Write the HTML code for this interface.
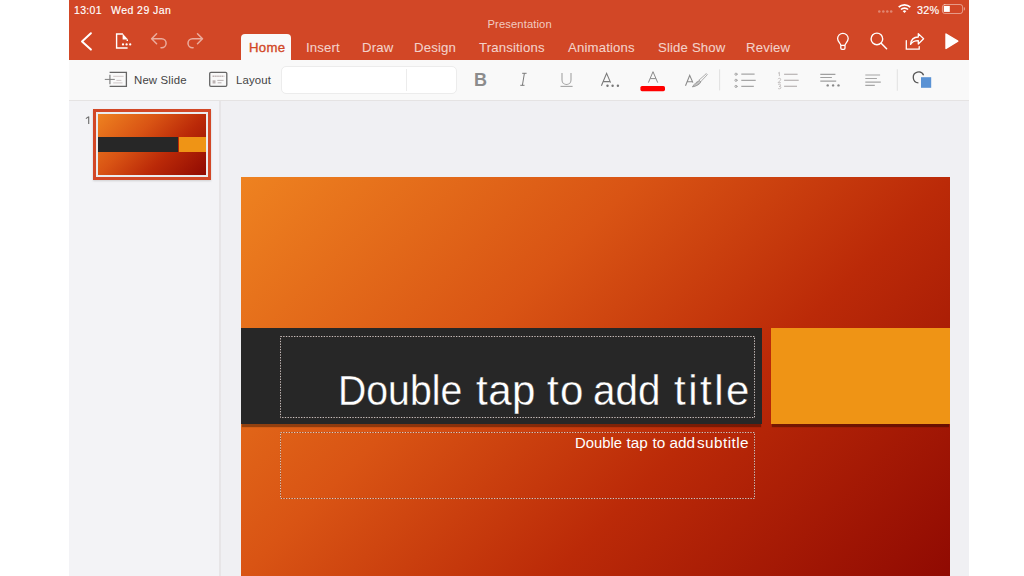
<!DOCTYPE html>
<html><head><meta charset="utf-8">
<style>
*{margin:0;padding:0;box-sizing:border-box}
html,body{width:1024px;height:576px;overflow:hidden;background:#fff;font-family:"Liberation Sans",sans-serif}
.a{position:absolute}
.t{position:absolute;white-space:nowrap;line-height:1}
#ribbon{left:69px;top:0;width:900px;height:60px;background:#d24726}
#toolbar{left:69px;top:60px;width:900px;height:41px;background:#f9f9f9;border-bottom:1px solid #e5e3e3}
#side{left:69px;top:101px;width:151px;height:475px;background:#f3f3f6}
#divider{left:219px;top:101px;width:2px;height:475px;background:#e7e5e7}
#canvas{left:221px;top:101px;width:748px;height:475px;background:#f0f0f3}
.st{color:#fff;font-size:10.5px;-webkit-text-stroke:0.15px #fff;letter-spacing:0.3px}
.tab{color:rgba(255,255,255,.75);font-size:13.2px;letter-spacing:0.15px;-webkit-text-stroke:0.1px rgba(255,255,255,.5)}
#hometab{left:241px;top:34px;width:50px;height:27px;background:#f9f9f9;border-radius:4px 4px 0 0}
.tb{color:#444;font-size:11.4px;letter-spacing:0.15px}
#slide{left:241px;top:177px;width:709px;height:399px;overflow:hidden;
 background:linear-gradient(135deg,#ee8220 0%,#d95414 36%,#bb2a08 64%,#900a02 100%)}
</style></head><body>
<div id="ribbon" class="a"></div>
<div id="toolbar" class="a"></div>
<div id="side" class="a"></div>
<div id="divider" class="a"></div>
<div id="canvas" class="a"></div>

<!-- status bar -->
<div class="t st" style="left:74px;top:5px">13:01</div>
<div class="t st" style="left:111px;top:5px;letter-spacing:0.45px">Wed 29 Jan</div>
<div class="t" style="left:487.5px;top:19px;font-size:11.2px;letter-spacing:0.12px;color:rgba(255,255,255,.72)">Presentation</div>
<div class="t st" style="left:917px;top:5px;font-size:10.8px">32%</div>

<!-- tabs -->
<div id="hometab" class="a"></div>
<div class="t tab" style="left:249px;top:41px;color:#d24726;-webkit-text-stroke:0.35px #d24726;letter-spacing:0.3px">Home</div>
<div class="t tab" style="left:306px;top:41px">Insert</div>
<div class="t tab" style="left:362px;top:41px">Draw</div>
<div class="t tab" style="left:414px;top:41px">Design</div>
<div class="t tab" style="left:479px;top:41px">Transitions</div>
<div class="t tab" style="left:568px;top:41px">Animations</div>
<div class="t tab" style="left:658px;top:41px">Slide Show</div>
<div class="t tab" style="left:746px;top:41px">Review</div>

<!-- toolbar text -->
<div class="t tb" style="left:134px;top:75px">New Slide</div>
<div class="t tb" style="left:236px;top:75px">Layout</div>
<div class="a" style="left:281px;top:66px;width:176px;height:28px;background:#fff;border:1px solid #ececec;border-radius:5px"></div>
<div class="a" style="left:406px;top:69px;width:1px;height:22px;background:#ececec"></div>

<!-- slide -->
<div id="slide" class="a">
  <div class="a" style="left:0;top:151px;width:521px;height:96px;background:#272727;box-shadow:0 4px 1px -1px rgba(0,0,0,.35)"></div>
  <div class="a" style="left:530px;top:151px;width:179px;height:96px;background:#ef9415;box-shadow:0 4px 1px -1px rgba(0,0,0,.35)"></div>
  <svg class="a" style="left:0;top:0" width="709" height="399" viewBox="0 0 709 399">
   <g fill="none" stroke-width="1">
    <rect x="39.5" y="159.5" width="474" height="81" stroke="rgba(60,30,20,.35)"/>
    <rect x="39.5" y="159.5" width="474" height="81" stroke="rgba(255,255,255,.72)" stroke-dasharray="1.35 1.35"/>
    <rect x="39.5" y="255.5" width="474" height="66" stroke="rgba(60,30,20,.35)"/>
    <rect x="39.5" y="255.5" width="474" height="66" stroke="rgba(255,255,255,.72)" stroke-dasharray="1.35 1.35"/>
   </g>
  </svg>
  <div class="a" style="left:0;top:193px;width:709px;height:50px;font-size:42px;line-height:1;color:#fff;white-space:nowrap;-webkit-text-stroke:0.3px #272727">
   <span class="a" style="left:97px;transform-origin:0 0;transform:scaleX(.933)">Double</span>
   <span class="a" style="left:235px;letter-spacing:0.5px">tap</span>
   <span class="a" style="left:306px;letter-spacing:1.4px">to</span>
   <span class="a" style="left:352px;transform-origin:0 0;transform:scaleX(.961)">add</span>
   <span class="a" style="left:433px;letter-spacing:2.5px">title</span>
  </div>
  <div class="a" style="left:0;top:258px;width:709px;height:20px;font-size:15.3px;line-height:1;color:#fff;white-space:nowrap">
   <span class="a" style="left:334px;transform-origin:0 0;transform:scaleX(.97)">Double</span>
   <span class="a" style="left:385.5px">tap</span>
   <span class="a" style="left:411.5px">to</span>
   <span class="a" style="left:428.5px">add</span>
   <span class="a" style="left:456px;letter-spacing:0.45px">subtitle</span>
  </div>
</div>

<!-- thumbnail -->
<div class="a" style="left:93px;top:109px;width:118px;height:71px;border:3px solid #d24726;background:#eaecee;box-shadow:0 1px 2px rgba(0,0,0,.15)"></div>
<div class="a" style="left:98px;top:114px;width:108px;height:61px;overflow:hidden;background:linear-gradient(135deg,#ee8220 0%,#d95414 36%,#bb2a08 64%,#900a02 100%)">
  <div class="a" style="left:0;top:23px;width:80px;height:15px;background:#272727"></div>
  <div class="a" style="left:81px;top:23px;width:27px;height:15px;background:#ef9415"></div>
</div>
<svg class="a" style="left:0;top:0" width="220" height="200"><path d="M88.7,116.6 V124 M88.7,116.6 L85.9,118.6" fill="none" stroke="#6a6a6a" stroke-width="1.1"/></svg>

<svg class="a" style="left:0;top:0" width="1024" height="576" viewBox="0 0 1024 576">
<g fill="none" stroke-linecap="round" stroke-linejoin="round">
 <!-- back chevron -->
 <polyline points="90.9,33.2 82,41.4 90.9,49.6" stroke="#fff" stroke-width="2"/>
 <!-- file icon -->
 <path d="M122.9,34 H116.6 V48 H127.6 M127.3,39.4 V41" stroke="#fff" stroke-width="1.4" stroke-linecap="butt" stroke-linejoin="miter"/>
 <path d="M122.6,33.4 L128,39.4 H122.6 Z" fill="#fff" stroke="none"/>
 <g fill="#fff" stroke="none"><circle cx="123" cy="44.4" r="1.15"/><circle cx="126.6" cy="44.4" r="1.15"/><circle cx="130.2" cy="44.4" r="1.15"/></g>
 <!-- undo -->
 <path d="M156.6,33.7 L151.6,38.8 L156.6,43.7 M151.8,38.8 H161.6 A4.5,4.5 0 0 1 161.6,47.8 H161" stroke="rgba(255,255,255,.55)" stroke-width="1.5"/>
 <!-- redo -->
 <path d="M197.5,33.7 L202.5,38.8 L197.5,43.7 M202.3,38.8 H192.5 A4.5,4.5 0 0 0 192.5,47.8 H193.1" stroke="rgba(255,255,255,.55)" stroke-width="1.5"/>
 <!-- bulb -->
 <path d="M840.8,45.3 C840.8,43.4 837.6,41.8 837.6,38.6 A5.3,5.3 0 0 1 848.2,38.6 C848.2,41.8 845,43.4 845,45.3 Z M840.8,45.3 V48.1 Q840.8,49.3 842,49.3 H843.8 Q845,49.3 845,48.1 V45.3" stroke="#fff" stroke-width="1.3"/>
 <!-- search -->
 <circle cx="876.9" cy="38.9" r="5.8" stroke="#fff" stroke-width="1.4"/>
 <path d="M881.2,43.3 L886.6,48.7" stroke="#fff" stroke-width="1.5"/>
 <!-- share -->
 <path d="M906.3,40.6 V49.2 H919.2 V46.6" stroke="#fff" stroke-width="1.3" stroke-linejoin="miter"/>
 <path d="M910.6,44.4 C911,39.6 914,37 918.3,37 V33.6 L923.6,38.8 L918.3,44 V40.6 C914.6,40.6 912.2,41.8 910.6,44.4 Z" stroke="#fff" stroke-width="1.3"/>
 <!-- play -->
 <path d="M946,34 L957.8,41.2 L946,48.4 Z" fill="#fff" stroke="#fff" stroke-width="1.4"/>
 <!-- status dots -->
 <g fill="rgba(255,255,255,.35)" stroke="none"><circle cx="879.3" cy="11.5" r="1.3"/><circle cx="883.3" cy="11.5" r="1.3"/><circle cx="887.3" cy="11.5" r="1.3"/><circle cx="891.2" cy="11.5" r="1.3"/></g>
 <!-- wifi -->
 <path d="M898.7,7.2 A8.2,8.2 0 0 1 910.3,7.2" stroke="#fff" stroke-width="1.7" stroke-linecap="butt"/>
 <path d="M901,9.5 A4.9,4.9 0 0 1 908,9.5" stroke="#fff" stroke-width="1.7" stroke-linecap="butt"/>
 <path d="M904.5,13 L902.7,11.2 A2.5,2.5 0 0 1 906.3,11.2 Z" fill="#fff" stroke="none"/>
 <!-- battery -->
 <rect x="942.4" y="4.5" width="20.2" height="9" rx="2.4" stroke="rgba(255,255,255,.45)" stroke-width="1"/>
 <rect x="943.8" y="5.9" width="6" height="6" fill="#fff" stroke="none"/>
 <path d="M963.8,7.2 H964.2 A0.8,0.8 0 0 1 965,8 V9.6 A0.8,0.8 0 0 1 964.2,10.4 H963.8 Z" fill="rgba(255,255,255,.45)" stroke="none"/>

 <!-- new slide icon -->
 <path d="M109.6,72.4 H126.4 V86.4 H109.6" stroke="#666" stroke-width="1.3" stroke-linecap="butt" stroke-linejoin="miter"/>
 <path d="M109.9,74.8 V84.2" stroke="#999" stroke-width="1.5" stroke-linecap="butt"/>
 <path d="M104.8,79.4 H114.8" stroke="#808080" stroke-width="1" stroke-linecap="butt"/>
 <path d="M113.2,76.3 H123.6 M116.4,80.4 H121.4 M113.2,82.9 H122.5" stroke="#cbc1c1" stroke-width="0.9" stroke-linecap="butt"/>
 <!-- layout icon -->
 <rect x="209.7" y="72.3" width="17.1" height="14" rx="1.2" stroke="#666" stroke-width="1.3"/>
 <path d="M212.6,76.3 H224.3" stroke="#b8acac" stroke-width="1.6" stroke-linecap="butt" stroke-dasharray="1.3 0.6"/>
 <rect x="212.6" y="80.3" width="2.9" height="3.2" fill="#bdb4b4" stroke="none"/>
 <path d="M217.3,80.4 H223.6 M217.7,82.8 H221.5" stroke="#b5adad" stroke-width="0.9" stroke-linecap="butt"/>

 <!-- italic I -->
 <path d="M522.2,73.3 H526.6 M520.3,85.3 H524.5 M524.4,73.3 L522.4,85.3" stroke="#7a7a7a" stroke-width="1" stroke-linecap="butt"/>
 <!-- underline U -->
 <path d="M562,73 V80 A4.5,4.5 0 0 0 571,80 V73" stroke="#a4a4a4" stroke-width="1.1" stroke-linecap="butt"/>
 <path d="M560.5,86.4 H572.6" stroke="#a4a4a4" stroke-width="1.1" stroke-linecap="butt"/>
 <!-- A.. -->
 <path d="M601.4,85.8 L606.6,73.4 L610.6,82.6 M603.6,81.6 H610.2" stroke="#7a7a7a" stroke-width="1.1" stroke-linecap="butt" stroke-linejoin="miter"/>
 <g fill="#777" stroke="none"><circle cx="607.5" cy="85.8" r="1.2"/><circle cx="612.6" cy="85.8" r="1.2"/><circle cx="617.9" cy="85.8" r="1.2"/></g>
 <!-- font color A -->
 <path d="M648.4,82.6 L653,71.7 L657.7,82.6 M650.2,78.6 H655.9" stroke="#8a8a8a" stroke-width="1" stroke-linecap="butt" stroke-linejoin="miter"/>
 <rect x="640.4" y="86" width="24.6" height="5.2" rx="1.6" fill="#ff0000" stroke="none"/>
 <!-- format painter -->
 <path d="M685.5,85.8 L689.7,75.3 L692.9,82.6 M687.1,81.8 H692.3" stroke="#8a8a8a" stroke-width="1.1" stroke-linecap="butt" stroke-linejoin="miter"/>
 <path d="M706.6,73.9 L707.3,74.7 L700.5,81.9 L699.1,80.6 Z" stroke="#9a9a9a" stroke-width="0.8"/>
 <path d="M699.3,80.9 C697.2,81.2 694.4,83.6 692.4,86.9 C695.9,86.2 699.6,84.7 700.7,82.2 Z" stroke="#8a8a8a" stroke-width="0.8" fill="#cfcfcf"/>
 <path d="M694.6,85.8 L697.8,82.3 M696.8,85.4 L699.4,82.8" stroke="#9a9a9a" stroke-width="0.6"/>

 <!-- dividers -->
 <path d="M719.6,69.3 V90.4 M897.3,69.3 V90.7" stroke="#e1e1e1" stroke-width="1" stroke-linecap="butt"/>
 <!-- bullets -->
 <g fill="none" stroke="#a6a6a6" stroke-width="1"><circle cx="736" cy="74.2" r="1.1"/><circle cx="736" cy="80.3" r="1.1"/><circle cx="736" cy="86.4" r="1.1"/></g>
 <path d="M741.3,74.2 H754.6 M741.3,80.3 H755.7 M741.3,86.4 H753.8" stroke="#a6a6a6" stroke-width="1.2" stroke-linecap="butt"/>
 <!-- numbers -->
 <path d="M784.1,74.25 H797.6 M784.1,80.3 H798.7 M784.1,86.3 H797" stroke="#aaa5a5" stroke-width="1.1" stroke-linecap="butt"/>
 <!-- align dots -->
 <path d="M820.3,74.3 H835.4 M820.3,77.5 H831.9 M820.3,81.2 H836.2" stroke="#a0a0a0" stroke-width="1.2" stroke-linecap="butt"/>
 <g fill="#888" stroke="none"><circle cx="827.7" cy="85.4" r="1.2"/><circle cx="833.1" cy="85.4" r="1.2"/><circle cx="838.5" cy="85.4" r="1.2"/></g>
 <!-- align left -->
 <path d="M865.3,75 H880.1 M865.3,78.5 H876.9 M865.3,82.1 H880.8 M865.3,85.4 H874.8" stroke="#a6a6a6" stroke-width="1.2" stroke-linecap="butt"/>
 <!-- shapes -->
 <path d="M923.6,75.2 A5.4,5.4 0 1 0 918.4,82.8" stroke="#555" stroke-width="1.3" stroke-linecap="butt"/>
 <rect x="921" y="77.2" width="10.2" height="10.6" fill="#5a92d4" stroke="none"/>
</g>
</svg>
<svg class="a" style="left:770px;top:66px" width="14" height="26" viewBox="770 66 14 26"><path d="M779.4,72.3 V76.1 M778.1,73.3 L779.4,72.3 M778,79.2 Q778.4,78.3 779.4,78.3 Q780.7,78.3 780.7,79.4 Q780.6,80.4 778,82.7 H780.9 M778,84.7 Q778.5,84.2 779.4,84.2 Q780.6,84.2 780.6,85.3 Q780.6,86.4 779.2,86.4 Q780.9,86.4 780.9,87.6 Q780.9,88.8 779.4,88.8 Q778.5,88.8 778,88.3" fill="none" stroke="#b8b2b2" stroke-width="0.8"/></svg>
<div class="t" style="left:474px;top:71px;font-size:18px;font-weight:bold;color:#8c8c8c">B</div>
</body></html>
